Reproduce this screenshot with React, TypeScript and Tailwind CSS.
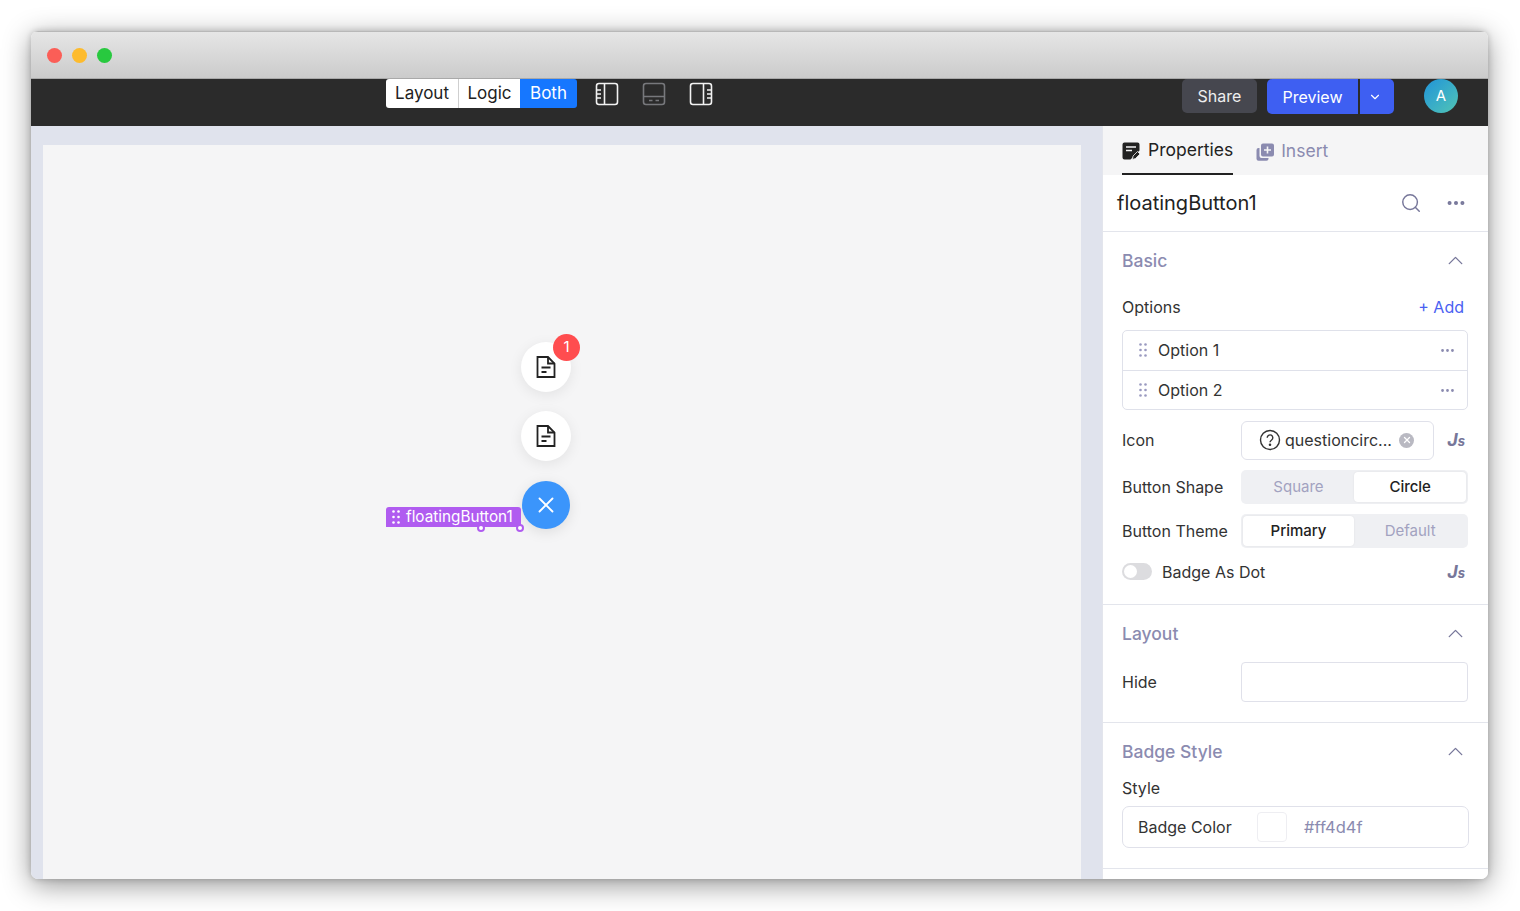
import { ChevronDown, ChevronUp, Ellipsis, Search, X } from "lucide-react";

const font = "font-['Inter','Liberation_Sans',sans-serif]";

function PanelIcon({ side, dim }: { side: "left" | "bottom" | "right"; dim?: boolean }) {
  return (
    <svg width="24" height="24" viewBox="0 0 24 24" fill="none" stroke={dim ? "#77787c" : "#f2f2f2"} strokeWidth="1.6">
      <rect x="1.5" y="1.5" width="21" height="21" rx="2.5" />
      {side === "left" && <path d="M9.5 1.5v21M2 8h4M2 12h4M2 16h4" />}
      {side === "right" && <path d="M14.5 1.5v21M18 8h4M18 12h4M18 16h4" />}
      {side === "bottom" && <path d="M1.5 14.5h21M7 18.500h3.500M13.500 18.500H17" />}
    </svg>
  );
}

function DocIcon() {
  return (
    <svg width="22" height="24" viewBox="0 0 22 24" fill="none" stroke="#222" strokeWidth="1.8">
      <path d="M2.500 2h10.500l6.500 6.500V22h-17z" />
      <path d="M13 2v6.500h6.500" />
      <path d="M6.500 12.500h9M6.500 17h5" />
    </svg>
  );
}

function Dots({ className }: { className: string }) {
  return (
    <svg width="8" height="14" viewBox="0 0 8 14" className={className} fill="currentColor">
      {[1.5, 7, 12.5].map((y) => (
        <g key={y}>
          <circle cx="1.5" cy={y} r="1.3" />
          <circle cx="6.5" cy={y} r="1.3" />
        </g>
      ))}
    </svg>
  );
}

function Js() {
  return (
    <span className="inline-block w-[18px] text-right text-[#77779a] italic font-bold leading-none">
      <span className="text-[18px]">J</span>
      <span className="text-[13px]">s</span>
    </span>
  );
}

function Section({ title, children, className }: { title: string; children?: React.ReactNode; className: string }) {
  return (
    <section className={`border-b border-[#e3e5ec] pl-[19px] pr-5 ${className}`}>
      <div className="flex items-center justify-between h-[22px] pr-[3px]">
        <span className="text-[17.5px] font-medium text-[#8b8bb0]">{title}</span>
        <ChevronUp size={25} strokeWidth={1.3} className="text-[#77779a] -mx-[3px] -mt-[3px] -mb-[1px]" />
      </div>
      {children}
    </section>
  );
}

function OptionRow({ label, border }: { label: string; border?: boolean }) {
  return (
    <div className={`flex items-center h-[39.5px] pl-[16px] pr-[11px] ${border ? "border-b border-[#dfe1ea]" : ""}`}>
      <Dots className="text-[#9a9ac0]" />
      <span className="ml-[11px] flex-1 text-[16px] text-[#333]">{label}</span>
      <Ellipsis size={17} className="text-[#8b8bb0]" />
    </div>
  );
}

function Segmented({ items, active }: { items: [string, string]; active: number }) {
  return (
    <div className="w-[228px] h-[34px] rounded-[5px] bg-[#eff0f3] p-[2px] grid grid-cols-2 text-[15px]">
      {items.map((item, i) => (
        <div
          key={item}
          className={`flex items-center justify-center rounded-[4px] ${
            i === active ? "bg-white text-[#222] font-medium shadow-[0_0_2px_rgba(0,0,0,0.08)]" : "text-[#a2a2c0]"
          }`}
        >
          {item}
        </div>
      ))}
    </div>
  );
}

export default function App() {
  return (
    <div className={`${font} w-[1520px] h-[911px] overflow-hidden bg-white pl-[31px] pt-[31px]`}>
      <div className="w-[1457px] h-[848px] rounded-[7px] overflow-hidden flex flex-col shadow-[0_6px_28px_rgba(0,0,0,0.42),0_0_6px_rgba(0,0,0,0.2)]">
        {/* title bar */}
        <div className="h-[48px] shrink-0 border-t border-b border-t-[#b8b8b8] border-b-[#a9a9a9] bg-gradient-to-b from-[#e6e6e6] to-[#cbcbcb] flex items-center gap-[10px] pl-[16px]">
          <span className="w-[15px] h-[15px] rounded-full bg-[#fb5e57]" />
          <span className="w-[15px] h-[15px] rounded-full bg-[#fdbb2d]" />
          <span className="w-[15px] h-[15px] rounded-full bg-[#28c93f]" />
        </div>

        {/* toolbar */}
        <header className="h-[47px] shrink-0 bg-[#2b2b2b] flex items-start pl-[355px] text-[17px]">
          <div className="h-[29px] flex rounded-[3px] overflow-hidden">
            <div className="w-[73px] bg-white text-[#222] flex items-center justify-center border-r border-[#cfcfcf]">Layout</div>
            <div className="w-[61px] bg-white text-[#222] flex items-center justify-center">Logic</div>
            <div className="w-[57px] bg-[#1677ff] text-white flex items-center justify-center">Both</div>
          </div>
          <div className="flex gap-[23px] ml-[18px] mt-[3px]">
            <PanelIcon side="left" />
            <PanelIcon side="bottom" dim />
            <PanelIcon side="right" />
          </div>
          <div className="flex ml-auto items-start text-[16px]">
            <button className="w-[75px] h-[34px] rounded-[5px] bg-[#46474f] text-[#eee]">Share</button>
            <div className="ml-[10px] h-[35px] flex gap-[2px] text-white">
              <button className="w-[91px] rounded-l-[5px] bg-[#3e5ff2]">Preview</button>
              <button className="w-[34px] pr-1 rounded-r-[5px] bg-[#3e5ff2] flex items-center justify-center">
                <ChevronDown size={14} strokeWidth={2} />
              </button>
            </div>
            <div className="ml-[30px] mr-[30px] w-[34px] h-[34px] rounded-full bg-gradient-to-br from-[#2193d8] to-[#52c4b4] text-white text-[15px] flex items-center justify-center">
              A
            </div>
          </div>
        </header>

        <div className="flex-1 flex min-h-0">
          {/* canvas */}
          <main className="w-[1071px] bg-[#e0e3ed] pl-3 pr-[21px] pt-[19px]">
            <div className="relative h-full bg-[#f5f5f6]">
              <div className="absolute left-[478px] top-[197px] w-[50px] h-[50px] rounded-full bg-white shadow-[0_3px_14px_rgba(0,0,0,0.08)] flex items-center justify-center">
                <DocIcon />
                <span className="absolute -right-[9px] -top-[8px] w-[27px] h-[27px] rounded-full bg-[#ff4d4f] text-white text-[15px] flex items-center justify-center">
                  1
                </span>
              </div>
              <div className="absolute left-[478px] top-[266px] w-[50px] h-[50px] rounded-full bg-white shadow-[0_3px_14px_rgba(0,0,0,0.08)] flex items-center justify-center">
                <DocIcon />
              </div>
              <div className="absolute left-[479px] top-[336px] w-[48px] h-[48px] rounded-full bg-[#3b95fb] shadow-[0_3px_14px_rgba(0,0,0,0.1)] flex items-center justify-center">
                <X size={26} strokeWidth={1.7} className="text-white" />
              </div>
              <div className="absolute left-[343px] top-[362px] w-[135px] h-[20px] rounded-t-[3px] bg-[#b05cf0] text-white text-[15.3px] flex items-center pl-[6px] gap-[6px]">
                <Dots className="text-white" />
                <span>floatingButton1</span>
                <span className="absolute left-[91px] -bottom-[5px] w-[8px] h-[8px] rounded-full border-2 border-[#b05cf0] bg-white" />
                <span className="absolute -right-[3px] -bottom-[5px] w-[8px] h-[8px] rounded-full border-2 border-[#b05cf0] bg-white" />
              </div>
            </div>
          </main>

          {/* properties panel */}
          <aside className="flex-1 bg-white border-l border-[#e3e5ec] text-[#333] text-[16px] overflow-hidden">
            <div className="h-[49px] bg-[#f5f5f6] flex items-stretch pl-[19px] gap-[23px] text-[17.5px]">
              <div className="flex items-center gap-[8px] border-b-2 border-[#222] text-[#222] pt-[2px]">
                <svg width="18" height="18" viewBox="0 0 18 18">
                  <path d="M2.500 0.500h13a2 2 0 0 1 2 2v6l-8.500 8.500-.5 .5H2.500a2 2 0 0 1-2-2v-13a2 2 0 0 1 2-2z" fill="#222" />
                  <path d="M4 5h10M4 8.500h6" stroke="#f5f5f6" strokeWidth="1.7" />
                  <path d="M10.500 17.500l.5-3.500 4.500-4.500 2.500 2.500-4.500 4.500z" fill="#222" stroke="#f5f5f6" strokeWidth="0.8" />
                </svg>
                Properties
              </div>
              <div className="flex items-center gap-[7px] text-[#8b8bb0] pt-[2px]">
                <svg width="18" height="18" viewBox="0 0 18 18" fill="#8b8bb0">
                  <path d="M0.500 7a2 2 0 0 1 2-2h1v8a2 2 0 0 0 2 2h7v.8a2 2 0 0 1-2 2H2.500a2 2 0 0 1-2-2z" />
                  <path fillRule="evenodd" d="M7 0.500h9a2 2 0 0 1 2 2v9a2 2 0 0 1-2 2H7a2 2 0 0 1-2-2v-9a2 2 0 0 1 2-2zM10.700 3.500v2.700H8v1.600h2.700v2.700h1.600V7.800h2.700V6.200h-2.700V3.500z" />
                </svg>
                Insert
              </div>
            </div>

            <div className="h-[57px] border-b border-[#e3e5ec] flex items-center justify-between pl-[14px] pr-[21px]">
              <span className="text-[20px] text-[#222]">floatingButton1</span>
              <div className="flex items-center gap-[23px] text-[#77779a]">
                <Search size={22} strokeWidth={1.6} />
                <Ellipsis size={22} strokeWidth={2.4} />
              </div>
            </div>

            <Section title="Basic" className="h-[373px] pt-[18px]">
              <div className="mt-[23px] flex items-center justify-between h-[24px] pr-[4px]">
                <span>Options</span>
                <span className="text-[#4a5ff2]">+ Add</span>
              </div>
              <div className="mt-[11px] h-[80px] rounded-[5px] border border-[#dfe1ea]">
                <OptionRow label="Option 1" border />
                <OptionRow label="Option 2" />
              </div>

              <div className="mt-[10px] flex items-center h-[40px]">
                <span className="w-[119px]">Icon</span>
                <div className="w-[193px] h-[39px] rounded-[6px] border border-[#e0e1ea] flex items-center pl-[17px] pr-[19px]">
                  <svg width="22" height="22" viewBox="0 0 22 22" fill="none" stroke="#333" strokeWidth="1.4" className="shrink-0">
                    <circle cx="11" cy="11" r="9.500" />
                    <path d="M8.200 8.700a2.800 2.800 0 1 1 4.400 2.300c-1 .7-1.600 1.200-1.600 2.300" />
                    <circle cx="11" cy="15.800" r="0.6" fill="#333" />
                  </svg>
                  <span className="ml-[4px] flex-1 whitespace-nowrap">questioncirc...</span>
                  <span className="w-[15px] h-[15px] rounded-full bg-[#b9b9c2] flex items-center justify-center shrink-0">
                    <X size={10} strokeWidth={3} className="text-white" />
                  </span>
                </div>
                <span className="ml-auto pr-[3px]"><Js /></span>
              </div>

              <div className="mt-[10px] flex items-center">
                <span className="w-[119px]">Button Shape</span>
                <Segmented items={["Square", "Circle"]} active={1} />
              </div>
              <div className="mt-[10px] flex items-center">
                <span className="w-[119px]">Button Theme</span>
                <Segmented items={["Primary", "Default"]} active={0} />
              </div>

              <div className="mt-[10px] flex items-center h-[27px]">
                <span className="w-[30px] h-[17px] rounded-full bg-[#dcdcdf] p-[2px]">
                  <span className="block w-[13px] h-[13px] rounded-full bg-white" />
                </span>
                <span className="ml-[10px]">Badge As Dot</span>
                <span className="ml-auto pr-[3px]"><Js /></span>
              </div>
            </Section>

            <Section title="Layout" className="h-[118px] pt-[18px]">
              <div className="mt-[17px] flex items-center">
                <span className="w-[119px]">Hide</span>
                <div className="w-[228px] h-[40px] rounded-[4px] border border-[#e0e1ea]" />
              </div>
            </Section>

            <Section title="Badge Style" className="h-[146px] pt-[18px]">
              <div className="mt-[13px] h-[24px] leading-[24px]">Style</div>
              <div className="mt-[6px] w-[347px] h-[42px] rounded-[7px] border border-[#e0e1ea] flex items-center pl-[15px]">
                <span className="w-[119px]">Badge Color</span>
                <span className="w-[30px] h-[30px] rounded-[4px] border border-[#eeeef2] bg-white" />
                <span className="ml-[17px] text-[16.5px] text-[#8b8bb0]">#ff4d4f</span>
              </div>
            </Section>
          </aside>
        </div>
      </div>
    </div>
  );
}
